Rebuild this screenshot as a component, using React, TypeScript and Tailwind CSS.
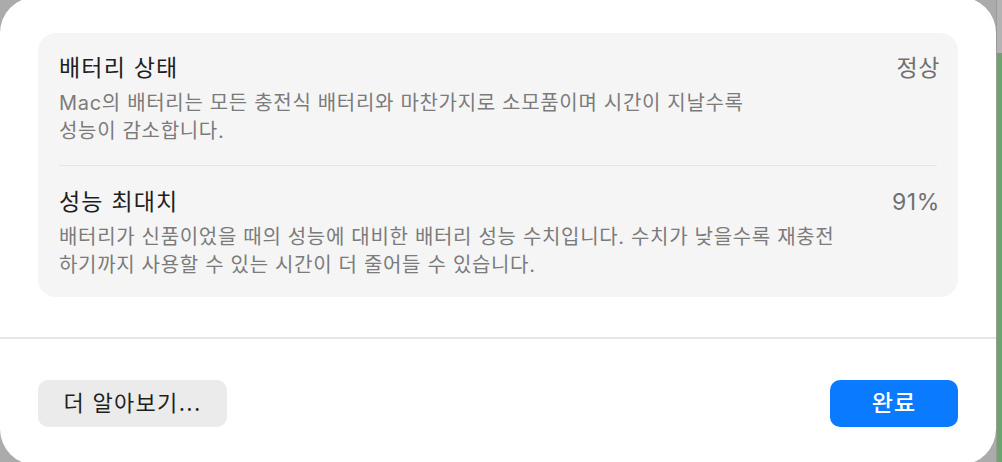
const rows = [
  {
    title: '배터리 상태',
    value: '정상',
    lines: [
      'Mac의 배터리는 모든 충전식 배터리와 마찬가지로 소모품이며 시간이 지날수록',
      '성능이 감소합니다.',
    ],
  },
  {
    title: '성능 최대치',
    value: '91%',
    lines: [
      '배터리가 신품이었을 때의 성능에 대비한 배터리 성능 수치입니다. 수치가 낮을수록 재충전',
      '하기까지 사용할 수 있는 시간이 더 줄어들 수 있습니다.',
    ],
  },
];

function InfoRow({ title, value, lines, first }: { title: string; value: string; lines: string[]; first: boolean }) {
  return (
    <div className={first ? 'pt-[21px] pb-[20px]' : 'pt-[22px] pb-[18px]'}>
      <div className="flex items-center justify-between">
        <h3 className="text-[23px] leading-[28px] tracking-[1.2px] text-[#1e1e1e]">{title}</h3>
        <span className="-mr-[3px] text-[23px] leading-[28px] tracking-[0.6px] text-[#707070]">{value}</span>
      </div>
      <div className="mt-[7px] text-[20px] leading-[28px] tracking-[0.68px] text-[#7b7b7b]">
        {lines.map((l) => (
          <p key={l} className="whitespace-nowrap">
            {l}
          </p>
        ))}
      </div>
    </div>
  );
}

export default function App() {
  return (
    <div
      className="relative flex h-[462px] w-[1002px] overflow-hidden bg-[#ababab]"
      style={{ fontFamily: 'Inter, "Noto Sans CJK KR", "Noto Sans", sans-serif' }}
    >
      {/* sheet */}
      <div className="-mt-[3px] flex h-[468px] w-[996px] shrink-0 flex-col rounded-[36px] bg-white">
        <div className="px-[38px] pt-[36px]">
          <div className="rounded-[18px] bg-[#f5f5f5] px-[21px]">
            <InfoRow {...rows[0]} first />
            <div className="h-px bg-[#e4e4e4]" />
            <InfoRow {...rows[1]} first={false} />
          </div>
        </div>

        <div className="mt-[40px] h-[2px] bg-[#e6e6e6]" />

        <div className="flex items-center justify-between px-[38px] pt-[41px]">
          <button className="flex h-[47px] w-[189px] items-center justify-center rounded-[10px] bg-[#ebebeb] text-[22px] tracking-[1.3px] text-[#1f1f1f]">
            더 알아보기...
          </button>
          <button className="flex h-[47px] w-[128px] items-center justify-center rounded-[10px] bg-[#0a7bff] text-[23px] font-medium tracking-[1px] text-white">
            완료
          </button>
        </div>
      </div>

      {/* window behind the sheet */}
      <div className="flex flex-1 flex-col border-l border-[#9a9a9a]">
        <div className="h-[53px] bg-[#b3b3b3]" />
        <div className="flex-1 bg-[#6aa46e]" />
      </div>
    </div>
  );
}
